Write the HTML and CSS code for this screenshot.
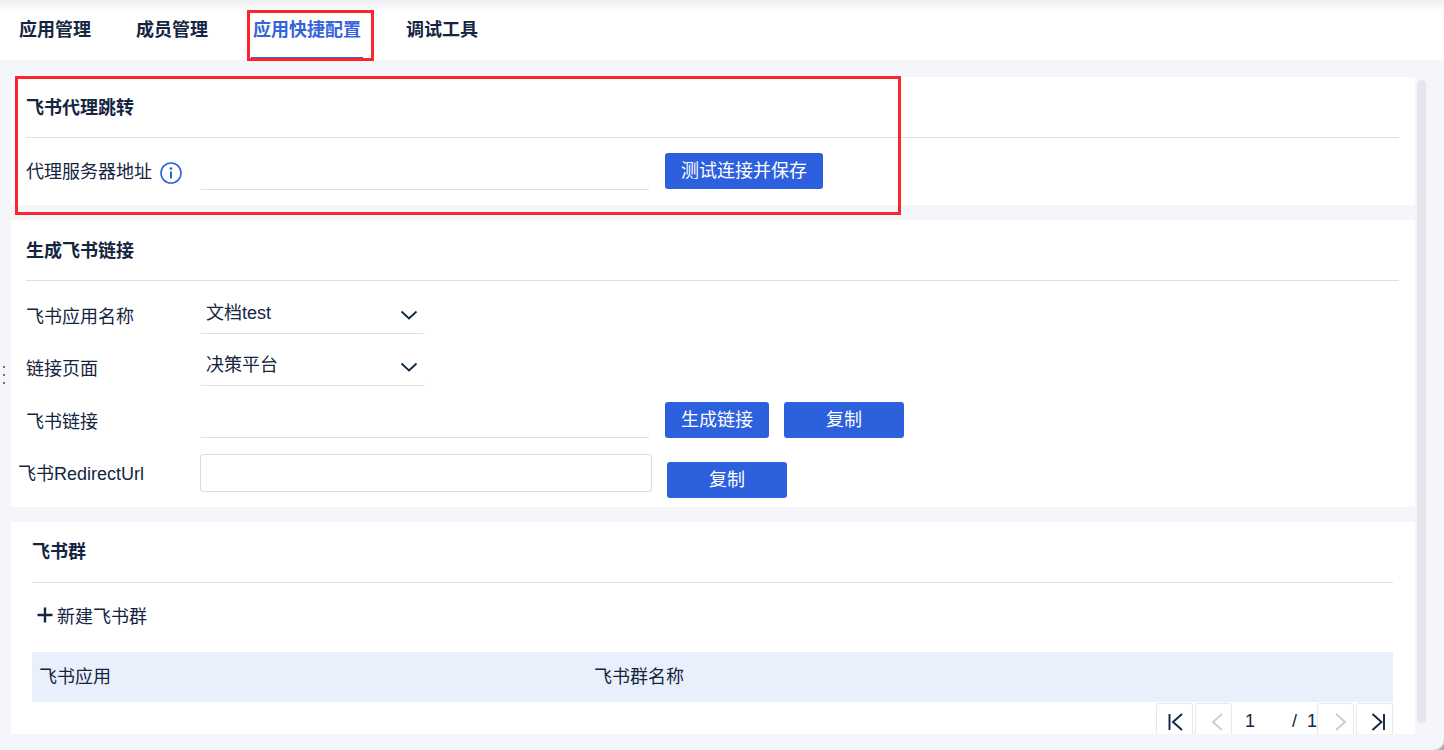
FILE: index.html
```html
<!DOCTYPE html>
<html lang="zh-CN">
<head>
<meta charset="utf-8">
<title>应用快捷配置</title>
<link rel="stylesheet" href="styles.css">
</head>
<body>
<div class="app">
  <nav class="tabs">
    <a class="tab">应用管理</a>
    <a class="tab">成员管理</a>
    <a class="tab active">应用快捷配置</a>
    <a class="tab">调试工具</a>
  </nav>
  <main class="main">
    <div class="handle"><i></i><i></i><i></i></div>
    <div class="content">
      <section class="card card-proxy">
        <h2 class="card-title">飞书代理跳转</h2>
        <div class="row row-proxy">
          <label class="label label-info">代理服务器地址
            <svg class="info" viewBox="0 0 22 22" width="22" height="22"><circle cx="11" cy="11" r="10" fill="none" stroke="#2f62dc" stroke-width="1.6"/><circle cx="11" cy="6.6" r="1.3" fill="#2f62dc"/><path d="M11 9.4v7" stroke="#2f62dc" stroke-width="2" fill="none"/></svg>
          </label>
          <div class="line-input wide"></div>
          <button class="btn btn-test">测试连接并保存</button>
        </div>
      </section>
      <section class="card card-link">
        <h2 class="card-title">生成飞书链接</h2>
        <div class="row row-select">
          <label class="label">飞书应用名称</label>
          <div class="select"><span>文档test</span><svg class="chev" viewBox="0 0 18 12" width="18" height="12"><path d="M1.5 2.5L9 9.5l7.500-7" fill="none" stroke="#14253f" stroke-width="1.8"/></svg></div>
        </div>
        <div class="row row-select">
          <label class="label">链接页面</label>
          <div class="select"><span>决策平台</span><svg class="chev" viewBox="0 0 18 12" width="18" height="12"><path d="M1.5 2.5L9 9.5l7.500-7" fill="none" stroke="#14253f" stroke-width="1.8"/></svg></div>
        </div>
        <div class="row row-link">
          <label class="label">飞书链接</label>
          <div class="line-input wide"></div>
          <button class="btn btn-gen">生成链接</button>
          <button class="btn btn-copy">复制</button>
        </div>
        <div class="row row-redirect">
          <label class="label label-redirect">飞书RedirectUrl</label>
          <div class="box-input"></div>
          <button class="btn btn-copy btn-copy2">复制</button>
        </div>
      </section>
      <section class="card card-group">
        <h2 class="card-title">飞书群</h2>
        <div class="new-row">
          <svg class="plus" viewBox="0 0 16 16" width="16" height="16"><path d="M8 .5v15M.5 8h15" stroke="#14253f" stroke-width="2.4" fill="none"/></svg>
          <span>新建飞书群</span>
        </div>
        <div class="thead"><span class="col-a">飞书应用</span><span class="col-b">飞书群名称</span></div>
        <div class="pager">
          <button class="pg"><svg viewBox="0 0 20 18" width="20" height="18"><path d="M4.500 1v16M17 1L8 9l9 8" fill="none" stroke="#14253f" stroke-width="1.9"/></svg></button>
          <button class="pg"><svg viewBox="0 0 20 18" width="20" height="18"><path d="M18 1L9 9l9 8" fill="none" stroke="#c9ced6" stroke-width="1.9"/></svg></button>
          <span class="pg-cur">1</span>
          <span class="pg-total">/&nbsp;&nbsp;1</span>
          <button class="pg"><svg viewBox="0 0 20 18" width="20" height="18"><path d="M10 1l9 8-9 8" fill="none" stroke="#c9ced6" stroke-width="1.9"/></svg></button>
          <button class="pg"><svg viewBox="0 0 20 18" width="20" height="18"><path d="M19 1v16M7.500 1l9 8-9 8" fill="none" stroke="#14253f" stroke-width="1.9"/></svg></button>
        </div>
      </section>
    </div>
    <div class="scrollbar"></div>
  </main>
</div>
<div class="mark mark-tab"></div>
<div class="mark mark-section"></div>
<div class="corner"></div>
</body>
</html>
```
FILE: styles.css
```css
* { box-sizing: border-box; }
html, body { margin: 0; height: 100%; overflow: hidden; }
body {
  font-family: "Liberation Sans", "Noto Sans CJK SC", sans-serif;
  font-size: 18px;
  color: #14253f;
  background: #f5f6f9;
}
.app { height: 750px; display: flex; flex-direction: column; }

.tabs {
  height: 60px;
  flex: none;
  display: flex;
  gap: 41px;
  padding-left: 17px;
  background: linear-gradient(#eeeff1 0, #ffffff 12px);
}
.tab {
  position: relative;
  padding: 0 2px;
  line-height: 60px;
  font-weight: 700;
  color: #14253f;
}
.tab.active { color: #3563dc; }
.tab.active::after {
  content: "";
  position: absolute;
  left: 0;
  right: 0;
  bottom: 2px;
  height: 1px;
  background: #2f62dc;
}

.main { height: 674px; flex: none; display: flex; padding: 17px 0 0 11px; position: relative; }
.handle {
  position: absolute;
  left: 3px;
  top: 306px;
  display: flex;
  flex-direction: column;
  gap: 6px;
}
.handle i { width: 2px; height: 2px; background: #6c7480; display: block; }
.content { width: 1404px; flex: none; display: flex; flex-direction: column; gap: 15px; height: 657px; overflow: hidden; }
.scrollbar { width: 9px; margin: 3px 0 11px 2px; border-radius: 5px; background: #e5e6eb; }

.card { background: #fff; flex: none; padding: 0 16px 0 15px; overflow: hidden; }
.card-proxy { height: 128px; }
.card-link { height: 287px; }
.card-group { height: 212px; padding: 0 22px 0 21px; }
.card-title {
  margin: 0;
  height: 61px;
  line-height: 63px;
  font-size: 18px;
  font-weight: 700;
  border-bottom: 1px solid #dfe0e4;
}
.card-group .card-title { line-height: 61px; }

.row { display: flex; align-items: flex-end; }
.label { width: 174px; flex: none; line-height: 24px; display: flex; align-items: center; }
.info { margin-left: 8px; margin-bottom: -2px; }
.label-redirect { margin-left: -8px; width: 182px; }

.line-input { height: 38px; border-bottom: 1px solid #dcdfe6; border-radius: 0 0 3px 3px; }
.wide { width: 450px; }
.box-input { width: 452px; height: 38px; border: 1px solid #d9dce5; border-radius: 3px; }

.btn {
  height: 36px;
  border: 0;
  border-radius: 3px;
  background: #2d60dc;
  color: #fff;
  font: inherit;
  padding: 0 0 4px;
}
.btn-test { width: 158px; margin-left: 15px; margin-bottom: 1px; }
.btn-gen { width: 104px; margin-left: 15px; }
.btn-copy { width: 120px; margin-left: 15px; }

.row-proxy { height: 52px; }
.row-proxy .label { margin-bottom: 6px; }
.row-select { height: 52px; }
.row-select:first-of-type { height: 53px; }
.row-select .label { margin-bottom: 5px; }
.select {
  width: 225px;
  height: 38px;
  padding: 0 6px;
  display: flex;
  align-items: center;
  justify-content: space-between;
  border-bottom: 1px solid #dcdfe6;
  border-radius: 0 0 3px 3px;
}
.select span { margin-top: -8px; }
.chev { margin-right: 1.5px; }
.row-link { height: 52px; }
.row-link .label { margin-bottom: 4px; }
.row-redirect { height: 54px; align-items: flex-start; }
.row-redirect .label { margin-top: 24px; }
.row-redirect .box-input { margin-top: 16px; }
.btn-copy2 { margin-top: 24px; }

.new-row { height: 69px; display: flex; align-items: center; padding: 0 0 6px 5px; gap: 4px; }
.thead { height: 50px; background: #e9f0fb; display: flex; align-items: center; padding: 0 0 4px 7px; }
.col-a { width: 555px; }
.pager { height: 40px; display: flex; align-items: flex-start; justify-content: flex-end; padding-top: 1px; }
.pg {
  width: 37px;
  height: 38px;
  margin-left: 2px;
  padding: 0;
  border: 1px solid #e7e8eb;
  border-radius: 3px;
  background: #fff;
  display: flex;
  align-items: center;
  justify-content: center;
}
.pg-cur { width: 60px; padding-left: 13px; line-height: 36px; }
.pg-total { width: 23px; line-height: 36px; white-space: nowrap; }

.mark { position: absolute; border: 3px solid #fb2530; pointer-events: none; }
.mark-tab { left: 247px; top: 10px; width: 127px; height: 51px; }
.mark-section { left: 15px; top: 76px; width: 886px; height: 139px; }
.corner {
  position: absolute;
  right: 0;
  bottom: 0;
  width: 10px;
  height: 10px;
  background: radial-gradient(circle at 0 0, transparent 9px, #a9abae 11px);
}
```
